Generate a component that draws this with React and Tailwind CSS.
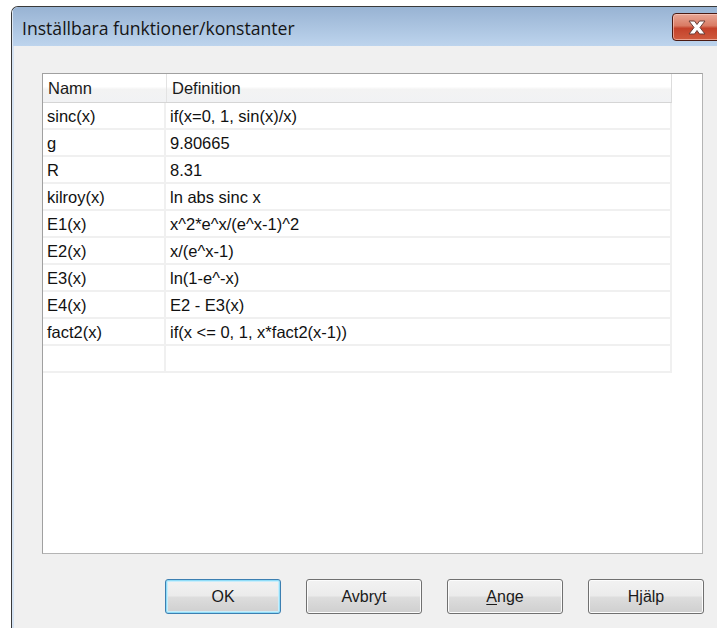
import React from "react";

const rows = [
  ["sinc(x)", "if(x=0, 1, sin(x)/x)"],
  ["g", "9.80665"],
  ["R", "8.31"],
  ["kilroy(x)", "ln abs sinc x"],
  ["E1(x)", "x^2*e^x/(e^x-1)^2"],
  ["E2(x)", "x/(e^x-1)"],
  ["E3(x)", "ln(1-e^-x)"],
  ["E4(x)", "E2 - E3(x)"],
  ["fact2(x)", "if(x <= 0, 1, x*fact2(x-1))"],
  ["", ""],
];

function CloseGlyph() {
  return (
    <svg width="22" height="15" viewBox="0 0 22 15">
      <path
        d="M3 1 L8.5 1 L11 4.5 L13.5 1 L19 1 L14 7.5 L19 14 L13.5 14 L11 10.5 L8.5 14 L3 14 L8 7.5 Z"
        fill="#ffffff"
        stroke="#6a3f38"
        strokeWidth="1"
        strokeLinejoin="round"
      />
    </svg>
  );
}

function WinButton({ children, focused }) {
  return (
    <button
      className={
        "w-[116px] h-[35px] rounded-[3px] border text-[16px] text-[#1a1a1a] flex items-center justify-center bg-[linear-gradient(#f2f2f2_0%,#ebebeb_48%,#dddddd_52%,#cfcfcf_100%)] " +
        (focused
          ? "border-[#3c7fb1] shadow-[inset_0_0_0_1px_#8fdcf7,inset_0_0_0_2px_#c9edfb]"
          : "border-[#707070] shadow-[inset_0_0_0_1px_#fcfcfc]")
      }
      style={{ fontFamily: '"Liberation Sans", Arial, sans-serif' }}
    >
      {children}
    </button>
  );
}

export default function App() {
  return (
    <div className="w-[717px] h-[628px] bg-white overflow-hidden">
      <div className="ml-[11px] mt-[6px] w-[710px] h-[640px] border-l border-t border-[#3a3a3a] rounded-tl-[7px] overflow-hidden flex flex-col">
        {/* title bar */}
        <div className="h-[39px] flex items-center bg-[linear-gradient(#98b3d3,#bdd4ed)] border-l border-[#dbe7f4]">
          <span
            className="pl-[9px] pt-[4px] text-[17.6px] text-[#151515]"
            style={{ fontFamily: '"Open Sans", "Noto Sans", sans-serif' }}
          >
            Inställbara funktioner/konstanter
          </span>
          <div className="ml-auto mr-[-1px] mt-[1px] w-[50px] h-[28px] rounded-[4px] border border-[#4a1a12] bg-[linear-gradient(#e8a796_0%,#d97b64_45%,#c4412a_55%,#cf5b3e_100%)] shadow-[inset_0_0_0_1px_rgba(255,210,200,0.6)] flex items-center pl-[13px]">
            <CloseGlyph />
          </div>
        </div>
        {/* client area */}
        <div
          className="flex-1 bg-[#f0f0f0] border-l-2 border-[#d6e3f2] pl-[28px] pt-[27px]"
          style={{ fontFamily: '"Liberation Sans", Arial, sans-serif' }}
        >
          <div className="w-[661px] h-[481px] bg-white border border-[#a0a0a0] border-r-[#b4b4b4] border-b-[#b4b4b4]">
            <div className="w-[629px]">
              {/* header */}
              <div className="h-[29px] flex border-b border-[#d5d5d5] border-r border-r-[#dcdcdc] bg-[linear-gradient(#ffffff_0%,#ffffff_45%,#f3f3f3_55%,#f1f2f4_100%)] text-[16.5px] text-[#1a1a1a]">
                <div className="w-[124px] border-r border-[#e3e3e3] pl-[5px] pt-[1px] flex items-center">Namn</div>
                <div className="flex-1 pl-[5px] pt-[1px] flex items-center">Definition</div>
              </div>
              {rows.map(([name, def], i) => (
                <div
                  key={i}
                  className="h-[27px] flex border-b-2 border-[#f0f0f0] border-r-2 border-r-[#f0f0f0] text-[16.5px] text-[#111]"
                >
                  <div className="w-[123px] border-r-2 border-[#f0f0f0] pl-[4px] pt-[1px] flex items-center leading-none">
                    {name}
                  </div>
                  <div className="flex-1 pl-[4px] pt-[1px] flex items-center leading-none">{def}</div>
                </div>
              ))}
            </div>
          </div>
          <div className="mt-[25px] pl-[123px] flex gap-[25px]">
            <WinButton focused>OK</WinButton>
            <WinButton>Avbryt</WinButton>
            <WinButton>
              <span>
                <span className="underline underline-offset-[2px]">A</span>nge
              </span>
            </WinButton>
            <WinButton>Hjälp</WinButton>
          </div>
        </div>
      </div>
    </div>
  );
}
